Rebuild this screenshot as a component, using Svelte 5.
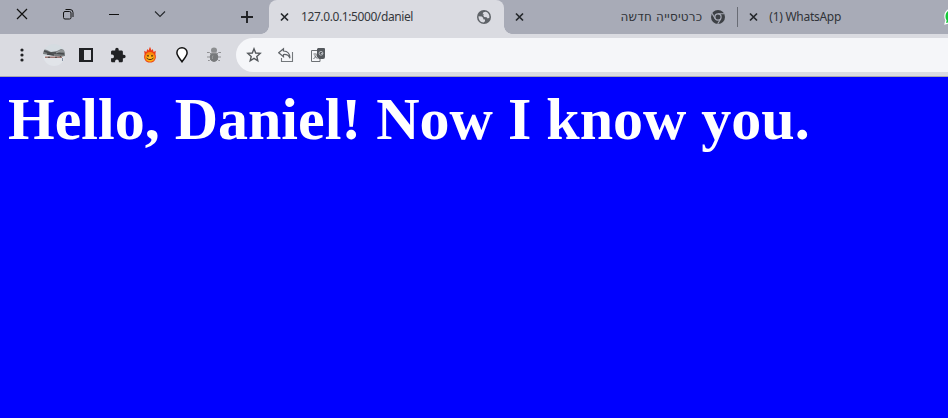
<script>
  const person = 'Daniel';
  const address = '127.0.0.1:5000/daniel';
</script>

{#snippet close()}
  <svg class="close" width="9" height="10" viewBox="0 0 9 10"><path d="M1 1.5 8 8.5M8 1.5 1 8.5" fill="none" stroke="#25282c" stroke-width="1.7" /></svg>
{/snippet}

<div class="browser">
  <header class="strip">
    <div class="controls">
      <button aria-label="Close window"><svg width="12" height="12" viewBox="0 0 12 12"><path d="M1 1 11 11M11 1 1 11" fill="none" stroke="#111" stroke-width="1.2" /></svg></button>
      <button aria-label="Restore"><svg width="12" height="12" viewBox="0 0 12 12"><rect x="1.5" y="3.5" width="7.5" height="7.5" rx="1.5" fill="none" stroke="#111" /><path d="M3.5 1.5H8a3 3 0 0 1 3 3V9" fill="none" stroke="#111" /></svg></button>
      <button aria-label="Minimize"><svg width="12" height="12" viewBox="0 0 12 12"><path d="M1 6.5H11" stroke="#111" /></svg></button>
      <button aria-label="Search tabs"><svg width="12" height="12" viewBox="0 0 12 12"><path d="M1 3.5 6 8.5 11 3.5" fill="none" stroke="#25282c" stroke-width="1.1" /></svg></button>
    </div>
    <button class="new" aria-label="New tab"><svg width="12" height="12" viewBox="0 0 12 12"><path d="M6 0V12M0 6H12" stroke="#202124" stroke-width="1.9" /></svg></button>
    <div class="tab active">
      {@render close()}
      <span class="title">{address}</span>
      <svg class="fav" width="14" height="14" viewBox="0 0 14 14"><circle cx="7" cy="7" r="7" fill="#5f6368" /><path d="M1.5 6.3 4.8 6.4 6.3 7.9 6.2 9.3 8 9.6V11.2L6.6 12.5C3.6 12.6 1.4 10 1.5 6.3ZM8.8 1.8C11.3 2.5 12.8 5 12.4 7.8L10.7 8.6 9.6 7.3 7.2 7 6.2 5.6 7.1 4.6 5.6 4.2 6.4 2.3Z" fill="#dadbe1" /></svg>
    </div>
    <div class="tab hebrew">
      {@render close()}
      <span class="title" dir="rtl">כרטיסייה חדשה</span>
      <svg class="fav" width="14" height="14" viewBox="0 0 14 14"><circle cx="7" cy="7" r="7" fill="#3d4045" /><circle cx="7" cy="7" r="3.1" fill="none" stroke="#a8abb7" stroke-width="1.2" /><path d="M7 3.7H13.2M4.2 8.7 1.1 3.4M9.8 8.7 6.7 13.8" fill="none" stroke="#a8abb7" stroke-width="1.1" /></svg>
    </div>
    <div class="tab last">
      {@render close()}
      <span class="title">(1) WhatsApp</span>
      <svg class="wa" width="4" height="16" viewBox="0 0 4 16"><path d="M4 .3C1.4 2 .3 4.4.3 7.3c0 1.5.4 2.9 1 4L.2 15.8 4 14.7Z" fill="#fff" /><path d="M4 2C2 3.5 1.5 5.5 1.5 7.4c0 1.6.5 2.8 1.2 4L2 13.9 4 13.4Z" fill="#16c83a" /></svg>
    </div>
  </header>

  <nav class="toolbar">
    <div class="actions">
      <span class="menu"><svg width="4" height="14" viewBox="0 0 4 14"><g fill="#202124"><circle cx="2" cy="2" r="1.6" /><circle cx="2" cy="7" r="1.6" /><circle cx="2" cy="12" r="1.6" /></g></svg></span>
      <span><svg width="22" height="22" viewBox="0 0 22 22">
        <defs><clipPath id="avatar"><circle cx="11" cy="11" r="11" /></clipPath></defs>
        <g clip-path="url(#avatar)"><rect width="22" height="22" fill="#d5dce1" /><rect y="12" width="22" height="10" fill="#e1e4e9" /><path d="M0 5 4 6 8 8 14 7 18 5 22 6V12L17 13 12 12 7 11 0 10Z" fill="#777b7d" /><path d="M1 7 7 9 12 9 21 10M4 10 11 11" stroke="#46494b" stroke-width="1.4" fill="none" /><path d="M13 9 17 7 21 7" stroke="#a1a5a7" fill="none" /><path d="M2 13.2H19" stroke="#9e7774" stroke-width="1.4" fill="none" /><path d="M5 13.4H7M12 13.4H14M17 12.6H18" stroke="#584e4c" stroke-width="1.4" /><path d="M19.5 14V17" stroke="#8590a2" /></g>
      </svg></span>
      <span><svg width="14" height="14" viewBox="0 0 14 14"><path fill="#202124" fill-rule="evenodd" d="M0 0H14V14H0ZM5 2V12H12V2Z" /></svg></span>
      <span><svg width="16" height="16" viewBox="1 0 22 23"><path fill="#202124" d="M20.5 11H19V7c0-1.1-.9-2-2-2h-4V3.5a2.5 2.5 0 0 0-5 0V5H4c-1.1 0-2 .9-2 2v3.8h1.5a2.7 2.7 0 0 1 0 5.4H2V20c0 1.1.9 2 2 2h3.8v-1.5a2.7 2.7 0 0 1 5.4 0V22H17c1.1 0 2-.9 2-2v-4h1.5a2.5 2.5 0 0 0 0-5Z" /></svg></span>
      <span><svg width="14" height="18" viewBox="0 0 14 18"><path fill="#ed3d16" d="M7 .8 8.5 4.5 9.8 3 10.6 6 12.8 4.8 12.4 8.2C14 12.5 11.4 16.6 7 16.6S0 12.5 1.6 8.2L1.2 4.8 3.4 6 4.2 3 5.5 4.5Z" /><circle cx="7" cy="11" r="5.1" fill="#fa8b0c" /><ellipse cx="7" cy="12" rx="3.8" ry="3.2" fill="#ffb31b" /><g fill="#4d260d"><circle cx="5" cy="9.8" r=".9" /><circle cx="9" cy="9.8" r=".9" /></g><path d="M3.5 12Q7 15.3 10.5 12" fill="none" stroke="#542b0c" /></svg></span>
      <span><svg width="12" height="16" viewBox="0 0 12 16"><path d="M6 .8C3 .8.9 3 .9 5.8.9 9 4 11.8 6 14.7 8 11.8 11.1 9 11.1 5.8 11.1 3 9 .8 6 .8Z" fill="#fff" stroke="#111" stroke-width="1.5" /></svg></span>
      <span><svg width="14" height="16" viewBox="0 0 14 16"><path d="M4 7 2.5 5.5H0M10 7 11.5 5.5H14M4 10H0M10 10H14M4 12 2.5 13.5H1M10 12 11.5 13.5H13" stroke="#909194" fill="none" /><ellipse cx="7" cy="3.2" rx="3" ry="2.7" fill="#8c8e90" /><ellipse cx="7" cy="10" rx="4.2" ry="5" fill="#77797b" /><path d="M4 5.8H10" stroke="#b2b3b6" /><path d="M6 8.5Q5 10 5.5 12" fill="none" stroke="#9b9c9e" /></svg></span>
    </div>
    <div class="omnibox">
      <span><svg width="16" height="16" viewBox="0 0 16 16"><path d="M8 1.8 9.7 6 14.2 6.4 10.8 9.4 11.8 13.8 8 11.4 4.2 13.8 5.2 9.4 1.8 6.4 6.3 6Z" fill="none" stroke="#55595d" stroke-width="1.4" /></svg></span>
      <span><svg width="16" height="16" viewBox="0 0 16 16"><path d="M5.5 1.7 .7 5.7 5.5 9.7V7.5C8.8 7.2 10.9 8.5 12 11.3 12 7 9.7 4.2 5.5 4Z" fill="none" stroke="#5f6368" stroke-width="1.2" /><path d="M3.5 11V14.5H14.5V5" fill="none" stroke="#74787c" stroke-width="1.1" /></svg></span>
      <span><svg width="16" height="16" viewBox="0 0 16 16"><path d="M7 3.5H1.5V14.5H10V12M3.5 7H6.5M6.5 7.5Q6 10 3.5 12M4.5 8.5Q5.5 10.5 7.5 11.5" fill="none" stroke="#6d7175" /><path d="M8 1H14Q15 1 15 2V10Q15 12 13 12H9L7 10V2Z" fill="#55595e" /><circle cx="11" cy="6.3" r="1.9" fill="none" stroke="#b7babf" /><path d="M11 6.5H13" stroke="#b7babf" /></svg></span>
    </div>
  </nav>
  <main><h1>Hello, {person}! Now I know you.</h1></main>
</div>

<style>
  .browser { width: 948px; height: 418px; overflow: hidden; display: flex; flex-direction: column; background: #00f; }
  .strip { height: 34px; display: flex; background: #a8abb7; flex: none; }
  button { border: 0; padding: 0; background: none; display: flex; align-items: center; justify-content: center; }
  svg { display: block; flex: none; }
  .controls { display: flex; width: 184px; height: 28px; margin-left: -1px; }
  .controls button { width: 46px; }
  .new { width: 24px; height: 34px; margin-left: 52px; margin-right: 10px; }
  .tab { height: 34px; box-sizing: border-box; display: flex; align-items: center; font: 12px/16px "Noto Sans", sans-serif; color: #303338; }
  .active { position: relative; width: 235px; padding: 0 13px 0 11px; background: #dadbe1; border-radius: 8px 8px 0 0; color: #35383c; }
  .active::before, .active::after { content: ""; position: absolute; bottom: 0; width: 8px; height: 8px; }
  .active::before { right: 100%; background: radial-gradient(circle at 0 0, transparent 7.5px, #dadbe1 8px); }
  .active::after { left: 100%; background: radial-gradient(circle at 100% 0, transparent 7.5px, #dadbe1 8px); }
  .title { flex: none; width: 112px; margin-left: 12px; white-space: nowrap; letter-spacing: -0.4px; }
  .fav { margin-left: auto; }
  .hebrew { width: 234px; padding: 0 12px 0 11px; }
  .hebrew .title { width: auto; margin-left: auto; margin-right: 9px; font-family: "DejaVu Sans", sans-serif; letter-spacing: 0.2px; }
  .hebrew .fav { margin-left: 0; }
  .last { position: relative; width: 210px; margin-left: 1px; padding-left: 11px; }
  .last::before { content: ""; position: absolute; left: -1px; top: 7px; width: 1px; height: 20px; background: #696c75; }
  .last .title { margin-left: 11px; letter-spacing: -0.27px; }
  .wa { margin-left: auto; }
  .toolbar { height: 43px; box-sizing: border-box; flex: none; display: flex; padding: 4px 0; border-bottom: 1px solid #aaa9ad; background: #dadbe1; }
  .actions { display: flex; width: 230px; margin-left: 6px; }
  .actions span, .omnibox span { width: 32px; height: 34px; display: flex; align-items: center; justify-content: center; flex: none; }
  .actions .menu { padding-right: 1px; box-sizing: border-box; }
  .omnibox { flex: 1; height: 34px; display: flex; padding-left: 2px; border-radius: 17px 0 0 17px; background: #f5f6f9; }
  main { flex: 1; padding: 8px; background: #00f; }
  h1 { margin: 0; font: bold 60px/69px "Liberation Serif", serif; white-space: nowrap; color: #fff; }
</style>
